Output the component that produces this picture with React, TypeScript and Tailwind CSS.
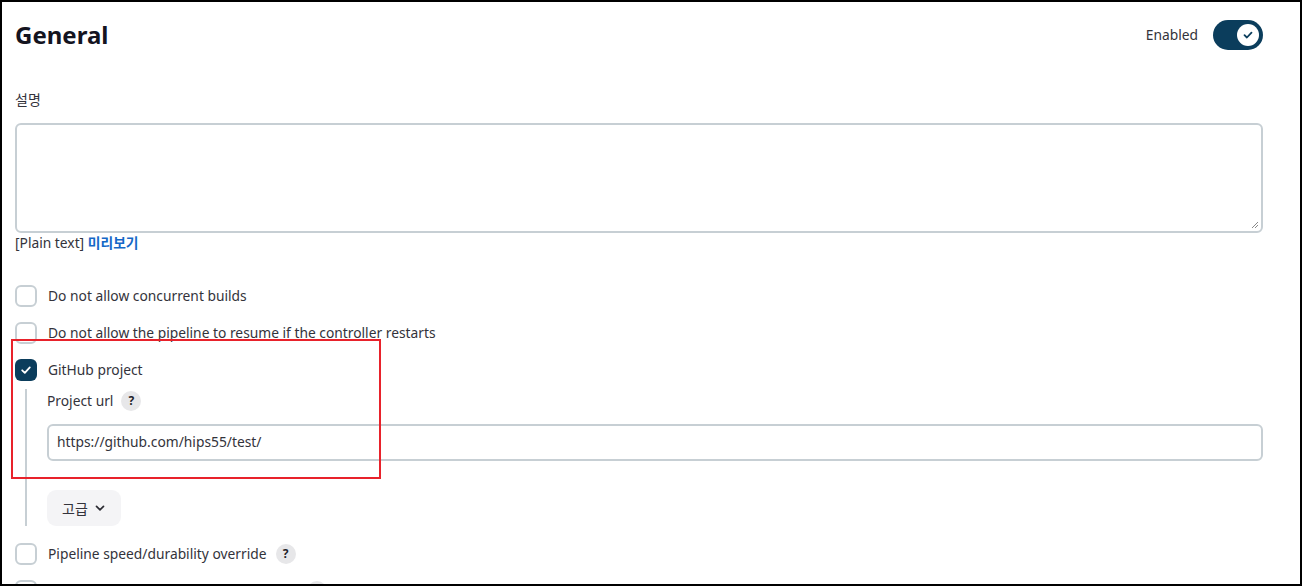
import React from "react";

const font = { fontFamily: '"Noto Sans", "Noto Sans CJK KR", sans-serif' };

function Box({ checked = false }: { checked?: boolean }) {
  return checked ? (
    <div className="w-[22px] h-[22px] rounded-[6px] bg-[#0b3d5c] flex items-center justify-center shrink-0">
      <svg width="12" height="12" viewBox="0 0 12 12" fill="none">
        <path d="M2.2 6.3 L4.8 8.8 L9.8 3.4" stroke="white" strokeWidth="1.8" strokeLinecap="round" strokeLinejoin="round" />
      </svg>
    </div>
  ) : (
    <div className="w-[22px] h-[22px] rounded-[6px] border-2 border-[#c7cfd4] bg-white shrink-0" />
  );
}

function Help({ mark = true }: { mark?: boolean }) {
  return (
    <span className="inline-flex w-[20px] h-[20px] rounded-full bg-[#e7e7e9] items-center justify-center text-[12px] font-bold text-[#1f1f2a] leading-none">{mark ? "?" : null}</span>
  );
}

function Row({ label, checked, help, className = "", blankWidth, mark = true }: { label?: string; checked?: boolean; help?: boolean; className?: string; blankWidth?: string; mark?: boolean }) {
  return (
    <div className={"flex items-center h-[22px] " + className}>
      <Box checked={checked} />
      {label ? (
        <span className="ml-[11px] text-[13.8px] text-[#33333b] leading-[20px]">{label}</span>
      ) : (
        <span className={"ml-[11px] h-[20px] " + (blankWidth ?? "")} />
      )}
      {help && <span className="ml-[9px] flex"><Help mark={mark} /></span>}
    </div>
  );
}

export default function App() {
  return (
    <div style={font} className="relative w-[1302px] h-[586px] border-2 border-black bg-white overflow-hidden">
      <div className="pl-[13px] w-[1261px]">
        <div className="mt-[18px] h-[30px] flex items-center justify-between">
          <h1 className="text-[24px] font-bold text-[#14141f] leading-[30px]">General</h1>
          <div className="flex items-center">
            <span className="text-[13.8px] text-[#33333b] mr-[15px]">Enabled</span>
            <div className="w-[50px] h-[30px] rounded-full bg-[#0b3d5c] flex items-center justify-end pr-[4px]">
              <div className="w-[22px] h-[22px] rounded-full bg-white flex items-center justify-center">
                <svg width="12" height="12" viewBox="0 0 12 12" fill="none">
                  <path d="M2.5 6.2 L4.9 8.5 L9.5 3.6" stroke="#0b3d5c" strokeWidth="1.8" strokeLinecap="round" strokeLinejoin="round" />
                </svg>
              </div>
            </div>
          </div>
        </div>

        <div className="mt-[40px] text-[14px] leading-[20px] text-[#33333b]">설명</div>
        <div className="relative mt-[13px] h-[110px] rounded-[6px] border-2 border-[#c7cfd4]">
          <svg className="absolute right-[2px] bottom-[2px]" width="9" height="9" viewBox="0 0 9 9">
            <path d="M8 2 L2 8 M8 5 L5 8" stroke="#8a8a8a" strokeWidth="1" />
          </svg>
        </div>
        <div className="text-[13.8px] leading-[20px] text-[#33333b]">
          [Plain text] <span className="text-[#1467c7] font-bold">미리보기</span>
        </div>

        <Row className="mt-[32px]" label="Do not allow concurrent builds" />
        <Row className="mt-[15px]" label="Do not allow the pipeline to resume if the controller restarts" />
        <Row className="mt-[15px]" label="GitHub project" checked />

        <div className="ml-[10px] mt-[8px] border-l-2 border-[#c7cfd4] pl-[20px] pt-[2px] h-[137px]">
          <div className="flex items-center h-[20px]">
            <span className="text-[13.8px] text-[#33333b] leading-[20px]">Project url</span>
            <span className="ml-[8px] flex"><Help /></span>
          </div>
          <div className="mt-[13px] h-[37px] rounded-[6px] border-2 border-[#c7cfd4] flex items-center pl-[8px] text-[13.8px] text-[#33333b]">
            https://github.com/hips55/test/
          </div>
          <div className="mt-[29px] w-[74px] h-[36px] rounded-[9px] bg-[#f4f4f6] flex items-center justify-center text-[14px] text-[#33333b]">
            고급
            <svg className="ml-[6px]" width="12" height="12" viewBox="0 0 12 12" fill="none">
              <path d="M2.5 4.3 L6 7.8 L9.5 4.3" stroke="#2b2b33" strokeWidth="1.7" strokeLinecap="round" strokeLinejoin="round" />
            </svg>
          </div>
        </div>

        <Row className="mt-[17px]" label="Pipeline speed/durability override" help />
        <Row className="mt-[15px]" blankWidth="w-[250px]" help mark={false} />
      </div>

      <div className="absolute left-[9px] top-[337px] w-[370px] h-[140px] border-2 border-[#e8222b]" />
    </div>
  );
}
